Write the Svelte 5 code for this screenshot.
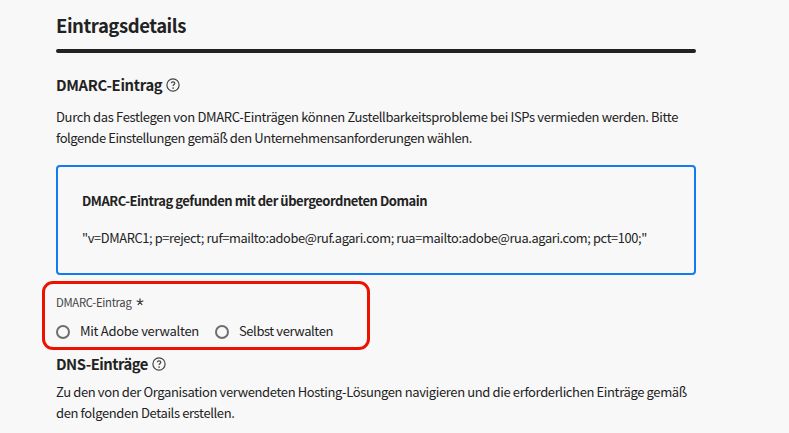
<script>
  const domain = '"v=DMARC1; p=reject; ruf=mailto:adobe@ruf.agari.com; rua=mailto:adobe@rua.agari.com; pct=100;"';
</script>

{#snippet help()}
  <svg class="help" viewBox="0 0 14 14" aria-hidden="true">
    <circle cx="7" cy="7" r="6.1" />
    <path d="M5.300 5.200C5.400 4.300 6 3.800 7 3.800c1.100 0 1.800.600 1.800 1.500 0 1.300-1.700 1.300-1.700 2.700" />
    <circle class="dot" cx="7.100" cy="10" r=".85" />
  </svg>
{/snippet}

<main>
  <h1>Eintragsdetails</h1>
  <hr />
  <h2><span>DMARC-Eintrag</span>{@render help()}</h2>
  <p class="intro"><span>Durch das Festlegen von DMARC-Einträgen können Zustellbarkeitsprobleme bei ISPs vermieden werden. Bitte</span><br /><span class="tight">folgende Einstellungen gemäß den Unternehmensanforderungen wählen.</span></p>
  <section class="record">
    <strong>DMARC-Eintrag gefunden mit der übergeordneten Domain</strong>
    <span class="code">{domain}</span>
  </section>
  <section class="choice">
    <div class="label"><span>DMARC-Eintrag</span>
      <svg viewBox="0 0 8 8" aria-hidden="true"><path d="M4 4V.5M4 4L.7 2.900M4 4l3.300-1.100M4 4L1.900 7M4 4l2.100 3" /></svg>
    </div>
    <div class="radios">
      <label><i></i><span>Mit Adobe verwalten</span></label>
      <label><i></i><span class="tight">Selbst verwalten</span></label>
    </div>
  </section>
  <h2 class="dns"><span>DNS-Einträge</span>{@render help()}</h2>
  <p class="outro">Zu den von der Organisation verwendeten Hosting-Lösungen navigieren und die erforderlichen Einträge gemäß<br />den folgenden Details erstellen.</p>
</main>

<style>
  :global(body) { background: #f8f8f8; }
  main {
    box-sizing: border-box;
    width: 789px;
    height: 433px;
    padding: 12px 93px 0 56px;
    overflow: hidden;
    background: #f8f8f8;
    color: #222;
    font: 13px/21px "Noto Sans CJK SC", "Noto Sans", sans-serif;
    white-space: nowrap;
  }
  h1, h2, p { margin: 0; }
  h1 { font-size: 18.5px; line-height: 26px; font-weight: 700; letter-spacing: -.45px; }
  hr { height: 4px; margin: 11px 0 0; border: 0; border-radius: 2px; background: #222; }
  h2 { display: flex; align-items: center; gap: 4px; margin-top: 22px; font-size: 14.8px; line-height: 20px; font-weight: 700; letter-spacing: -.3px; }
  .help { width: 14px; height: 14px; fill: none; stroke: #444; stroke-width: 1.2; }
  .help .dot { fill: #444; stroke: none; }
  .intro { margin-top: 11px; letter-spacing: -.35px; }
  .intro .tight { letter-spacing: -.43px; }
  .record {
    box-sizing: border-box;
    display: flex;
    flex-direction: column;
    align-items: flex-start;
    gap: 16px;
    height: 110px;
    margin-top: 17px;
    padding: 23px 24px;
    border: 2px solid #147af3;
    border-radius: 4px;
  }
  strong { letter-spacing: -.47px; }
  .code { font-size: 12.8px; letter-spacing: -.36px; }
  .choice {
    box-sizing: border-box;
    width: 328px;
    height: 69px;
    margin: 6px 0 0 -14px;
    padding: 9px 0 0 11px;
    border: 3px solid #ee1100;
    border-radius: 11px;
  }
  .label { display: flex; align-items: center; gap: 5px; font-size: 11.3px; line-height: 18px; letter-spacing: -.31px; color: #444; }
  .label svg { width: 8px; height: 8px; fill: none; stroke: #444; stroke-width: 1.3; }
  .radios { display: flex; gap: 16px; margin-top: 9px; letter-spacing: -.28px; }
  .radios .tight { letter-spacing: -.42px; }
  label { display: flex; align-items: center; gap: 10px; }
  i { box-sizing: border-box; width: 14px; height: 14px; margin-top: 2px; border: 2px solid #6e6e6e; border-radius: 50%; }
  h2.dns { margin-top: 4px; letter-spacing: -.5px; }
  .outro { margin-top: 7px; letter-spacing: -.37px; }
</style>
